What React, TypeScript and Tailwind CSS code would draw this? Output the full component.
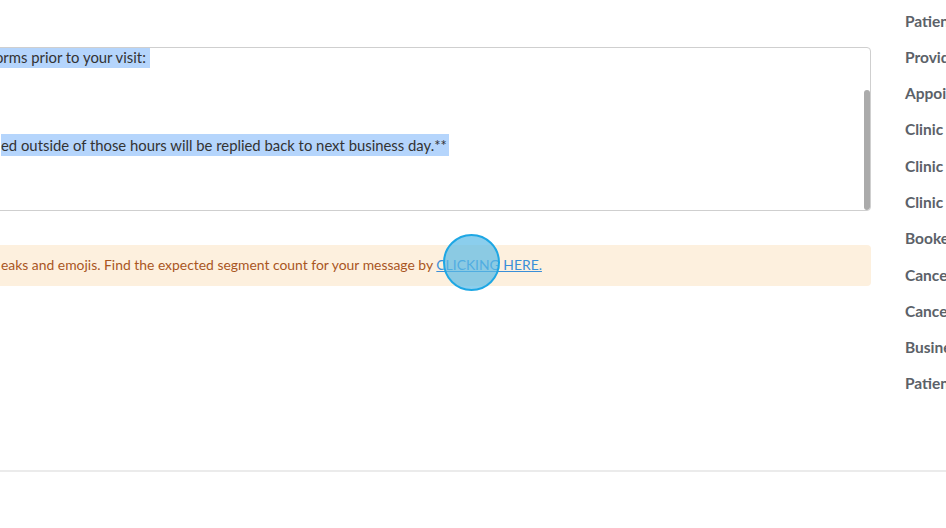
const fields = [
  "Patient Name",
  "Provider Name",
  "Appointment Date",
  "Clinic Name",
  "Clinic Address",
  "Clinic Phone",
  "Booked Date",
  "Cancel Link",
  "Cancellation Policy",
  "Business Hours",
  "Patient Portal",
];

function MessageBox() {
  return (
    <div className="relative h-[164px] w-[879px] -ml-[8px] overflow-hidden rounded-[4px] border border-[#cfcfcf] bg-white">
      <div className="-mt-[2px] pl-[8px] text-[14.85px] leading-[22px] text-[#333333]">
        <div className="h-[22px] whitespace-pre">
          <span className="-ml-[11px] inline-block h-[22px] bg-[#b5d5fc]">forms prior to your visit: </span>
        </div>
        <div className="h-[22px]" />
        <div className="h-[22px]" />
        <div className="h-[22px]" />
        <div className="h-[22px] whitespace-pre">
          <span className="inline-block h-[22px] bg-[#b5d5fc] pr-[2px]">ed outside of those hours will be replied back to next business day.**</span>
        </div>
        <div className="h-[22px]" />
        <div className="h-[22px]" />
      </div>
      {/* scrollbar thumb */}
      <div className="absolute right-0 top-[42px] h-[120px] w-[6px] rounded-full bg-[#ababab]" />
    </div>
  );
}

function SegmentNotice() {
  return (
    <div className="mt-[34px] flex h-[41px] w-[879px] -ml-[8px] items-center rounded-[4px] bg-[#fdf0de] pl-[9px] text-[13.9px] text-[#a9561f]">
      <span className="whitespace-pre">
        eaks and emojis. Find the expected segment count for your message by{" "}
        <a href="#" className="text-[#3b8fd8] underline">CLICKING HERE.</a>
      </span>
    </div>
  );
}

function FieldList() {
  return (
    <div className="ml-[34px] shrink-0 pt-[3px]">
      {fields.map((f, i) => (
        <div key={i} className="flex h-[36.3px] items-center whitespace-nowrap text-[15.5px] font-bold text-[#5b6168]">
          {f}
        </div>
      ))}
    </div>
  );
}

export default function App() {
  return (
    <div
      className="relative h-[528px] w-[946px] overflow-hidden bg-white"
      style={{ fontFamily: "Lato, 'Open Sans', sans-serif" }}
    >
      <div className="flex h-[470px]">
        <div className="shrink-0 pt-[47px]">
          <MessageBox />
          <SegmentNotice />
        </div>
        <FieldList />
      </div>
      <div className="h-[58px] border-t-2 border-[#ebebeb] bg-white" />

      {/* click indicator */}
      <div className="absolute left-[443px] top-[234px] h-[57px] w-[57px] rounded-full border-2 border-[#1ea7e4] bg-[#5ab9e6]/70" />
    </div>
  );
}
